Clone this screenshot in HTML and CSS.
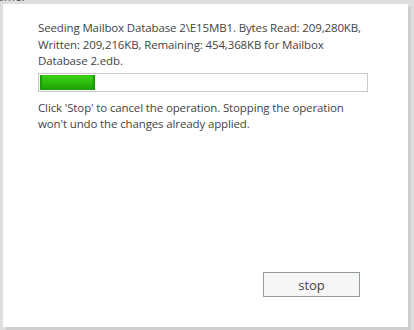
FILE: index.html
```html
<!DOCTYPE html>
<html>
<head>
<meta charset="utf-8">
<link rel="stylesheet" href="styles.css">
</head>
<body>
<div class="behind"><span class="behind-text">Name:</span></div>
<div class="dialog">
  <p class="status">Seeding Mailbox Database 2\E15MB1. Bytes Read: 209,280KB, Written: 209,216KB, Remaining: 454,368KB for Mailbox Database 2.edb.</p>
  <div class="progress"><div class="fill" style="width:17%"></div></div>
  <p class="hint">Click 'Stop' to cancel the operation. Stopping the operation won't undo the changes already applied.</p>
  <div class="actions"><button class="stop">stop</button></div>
</div>
</body>
</html>
```
FILE: styles.css
```css
html, body {
  margin: 0;
  padding: 0;
}
body {
  width: 414px;
  height: 330px;
  background: #dedede;
  font-family: "Open Sans", "Segoe UI", sans-serif;
  color: #444;
  overflow: hidden;
}
.behind {
  height: 4px;
  overflow: hidden;
}
.behind-text {
  display: block;
  font-size: 12px;
  line-height: 12px;
  margin-top: -9px;
  margin-left: -12px;
  color: #555;
}
.dialog {
  margin-left: 3px;
  width: 405px;
  height: 323px;
  background: #fff;
  box-shadow: 3px 3px 0 #cfcfcf;
  box-sizing: border-box;
  padding: 16px 40px 0 35px;
  display: flex;
  flex-direction: column;
}
.status, .hint {
  margin: 0;
  font-size: 11.5px;
  line-height: 16.5px;
  letter-spacing: -0.13px;
}
.progress {
  margin-top: 3px;
  height: 19px;
  border: 1px solid #c9c9c9;
  box-sizing: border-box;
  background: #fff;
  padding: 1px;
}
.fill {
  height: 100%;
  background: linear-gradient(#3fd21a, #2bbd0a 50%, #1d9f05);
  box-shadow: inset 2px 0 1px #1c9a06, inset -2px 0 1px #1c9a06;
}
.hint {
  margin-top: 8px;
}
.actions {
  margin-top: auto;
  margin-bottom: 30px;
  display: flex;
  justify-content: flex-end;
  padding-right: 8px;
}
.stop {
  width: 97px;
  height: 25px;
  border: 1px solid #909c9c;
  background: #f6f6f6;
  font-family: "Open Sans", sans-serif;
  font-size: 13px;
  color: #444;
  padding: 0;
}
```
